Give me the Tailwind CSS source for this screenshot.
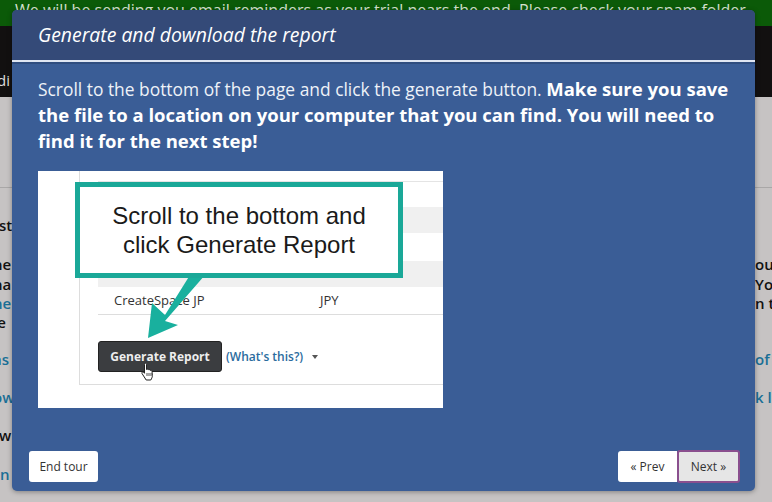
<!DOCTYPE html>
<html lang="en">
<head>
    <meta charset="UTF-8">
    <script src="https://cdn.jsdelivr.net/npm/@tailwindcss/browser@4"></script>
    <title>Generate and download the report</title>
</head>
<body class="font-['Open_Sans',sans-serif]">
  <div class="relative h-[502px] w-[772px] overflow-hidden bg-[#c6c3c3]">
    <!-- Page behind the overlay -->
    <div class="h-[26px] overflow-hidden bg-[#0b5a08] pl-[15px] text-[16px] leading-[20px] text-[#d5e2d0] whitespace-nowrap">We will be sending you email reminders as your trial nears the end. Please check your spam folder</div>
    <div class="flex h-[71px] items-end bg-[#121010] pb-[7px] text-[15px] leading-[20px] text-[#ddd]">
      <span class="ml-[-3px]">di</span>
    </div>
    <div class="h-[91px] border-b border-[#a9a7a7]"></div>
    <div class="flex justify-between text-[15px] font-semibold text-[#111]">
      <div class="ml-[-7px] w-[40px] whitespace-nowrap leading-[24px]">
        <div class="mt-[25px] pl-[6px]">st</div>
        <div class="mt-[15px]">ne</div>
        <div class="mt-[-4px]">ha</div>
        <div class="mt-[-5px] text-[#1a6f96]">ne</div>
        <div class="mt-[-5px]">ie</div>
        <div class="mt-[13px] text-[#1a6f96]">as</div>
        <div class="mt-[14px] text-[#1a6f96]">ow</div>
        <div class="mt-[14px] pl-[6px]">w</div>
        <div class="mt-[15px] pl-[7px] text-[#1a6f96]">n</div>
      </div>
      <div class="w-[17px] whitespace-nowrap leading-[24px]">
        <div class="mt-[64px]">ou</div>
        <div class="mt-[-4px]">You</div>
        <div class="mt-[-5px]">n th</div>
        <div class="mt-[32px] text-[#1a6f96]">of y</div>
        <div class="mt-[14px] text-[#1a6f96]">k l</div>
      </div>
    </div>

    <!-- Tour modal -->
    <div class="absolute top-[10px] left-[12px] flex h-[481px] w-[743px] flex-col rounded-[5px] bg-[#3a5d96] text-white shadow-[0_1px_5px_rgba(0,0,0,0.35)]">
      <div class="flex h-[52px] items-center rounded-t-[5px] border-b-[2px] border-[#dfe6f2] bg-[#344a78] pl-[26px] text-[19.4px] italic shadow-[0_2px_0_#2f4d7f]">
        Generate and download the report
      </div>
      <div class="flex-1 px-[26px] pt-[14px]">
        <p class="w-[700px] text-[17.4px] leading-[25px] text-[#eef2f8]">Scroll to the bottom of the page and click the generate button. <b class="text-[18.5px] font-bold text-white">Make sure you save the file to a location on your computer that you can find. You will need to find it for the next step!</b></p>

        <!-- Screenshot in the step -->
        <div class="relative mt-[17px] h-[237px] w-[405px] overflow-hidden bg-white">
          <div class="ml-[41px] h-[214px] w-[364px] border-b border-l border-[#dddddd] pt-[10px] pl-[18px]">
            <div class="h-[26px] border-t border-[#e4e4e4]"></div>
            <div class="h-[26px] bg-[#f0f0f0]"></div>
            <div class="h-[28px]"></div>
            <div class="h-[26px] bg-[#f0f0f0]"></div>
            <div class="flex h-[28px] items-center border-b border-[#dddddd] pl-[16px] text-[13px] text-[#333]">
              <span class="w-[206px]">CreateSpace JP</span><span>JPY</span>
            </div>
            <div class="mt-[26px] flex items-center">
              <div class="flex h-[31px] w-[124px] items-center justify-center rounded-[3px] border border-[#222] bg-[#3b3d40] text-[12px] font-bold text-[#eee]">Generate Report</div>
              <span class="ml-[4px] text-[12px] font-semibold text-[#2b6c9e]">(What's this?)</span>
              <span class="ml-[9px] h-0 w-0 border-x-[3px] border-t-[4px] border-x-transparent border-t-[#555]"></span>
            </div>
          </div>

          <!-- Arrow -->
          <svg class="absolute top-[100px] left-[100px]" width="80" height="80" viewBox="0 0 80 80">
            <path d="M52 4 L67 4 L27 50 L40 54 L10 67 L14 32 L27 44 Z" fill="#19b09e"/>
          </svg>

          <!-- Cursor -->
          <svg class="absolute top-[191px] left-[102px]" width="16" height="20" viewBox="0 0 16 20">
            <path d="M4.5 1.5c1-.6 2 0 2 1v5l1-.3c.8-.2 1.2.2 1.3.6.7-.3 1.4 0 1.6.6.7-.3 1.5.1 1.6.9l.4 4.2c0 1.8-.8 3-1.6 4.5H6.2L2 11.5c-.6-1 .4-2 1.5-1.2l1 1V2.5z" fill="#fff" stroke="#222" stroke-width="1"/>
            <path d="M7 11v3M9 11v3M11 11v3" stroke="#222" stroke-width="0.8"/>
          </svg>

          <!-- Callout -->
          <div class="absolute top-[11px] left-[37px] flex h-[96px] w-[328px] items-center justify-center border-[5px] border-[#1aa898] bg-white text-center font-['Liberation_Sans',sans-serif] text-[24px] leading-[29px] text-[#1a1a1a]">
            Scroll to the bottom and<br>click Generate Report
          </div>
        </div>
      </div>
      <div class="flex items-center justify-between pr-[15px] pb-[8px] pl-[17px]">
        <button class="h-[31px] w-[69px] rounded-[3px] bg-white text-[12px] text-[#333]">End tour</button>
        <div class="flex items-center">
          <button class="h-[31px] w-[59px] rounded-l-[3px] bg-white text-[12px] text-[#333]">« Prev</button>
          <button class="h-[33px] w-[63px] rounded-[3px] border-[2px] border-[#8a4f8e] bg-[#e6e6e6] text-[12px] text-[#333]">Next »</button>
        </div>
      </div>
    </div>
  </div>
</body>
</html>
